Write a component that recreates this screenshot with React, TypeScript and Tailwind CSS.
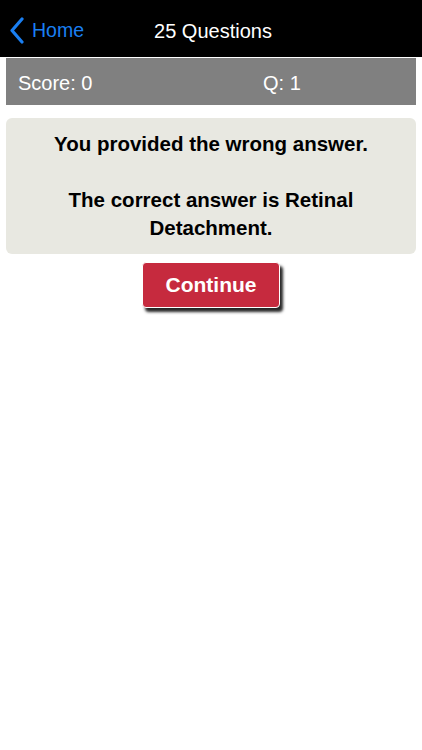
export default function App() {
  return (
    <div
      className="min-h-[750px] w-full bg-white"
      style={{ fontFamily: '"Liberation Sans", Arial, sans-serif' }}
    >
      {/* Nav bar */}
      <div className="relative flex h-[57px] items-center justify-center bg-black pt-[4px]">
        <button className="absolute left-[9px] top-0 flex h-full items-center gap-[7px] pt-[4px] text-[#1a7ff2]">
          <svg width="16" height="27" viewBox="0 0 16 27" fill="none">
            <path d="M13 2 L3 13.5 L13 25" stroke="currentColor" strokeWidth="3.2" strokeLinecap="round" strokeLinejoin="round" />
          </svg>
          <span className="text-[19.5px] leading-none">Home</span>
        </button>
        <h1 className="pl-[4px] text-[20px] font-medium leading-none text-white">25 Questions</h1>
      </div>

      {/* Score bar */}
      <div className="mx-[6px] mt-px flex h-[47px] items-center bg-[#808080] pt-[2px] text-[20px] text-white">
        <span className="w-[257px] pl-[12px]">Score: 0</span>
        <span>Q: 1</span>
      </div>

      {/* Result card */}
      <div className="mx-[6px] mt-[13px] rounded-[6px] bg-[#e8e8e1] px-[10px] py-[12px] text-center text-[20.5px] font-bold leading-[28px] text-black">
        <p>You provided the wrong answer.</p>
        <p className="h-[28px]" />
        <p>The correct answer is Retinal Detachment.</p>
      </div>

      <div className="mt-[8px] flex justify-center">
        <button className="h-[46px] w-[138px] rounded-[4px] border border-white bg-[#c62a3e] text-[21px] font-bold text-white shadow-[3px_4px_3px_rgba(0,0,0,0.85)]">
          Continue
        </button>
      </div>
    </div>
  )
}
